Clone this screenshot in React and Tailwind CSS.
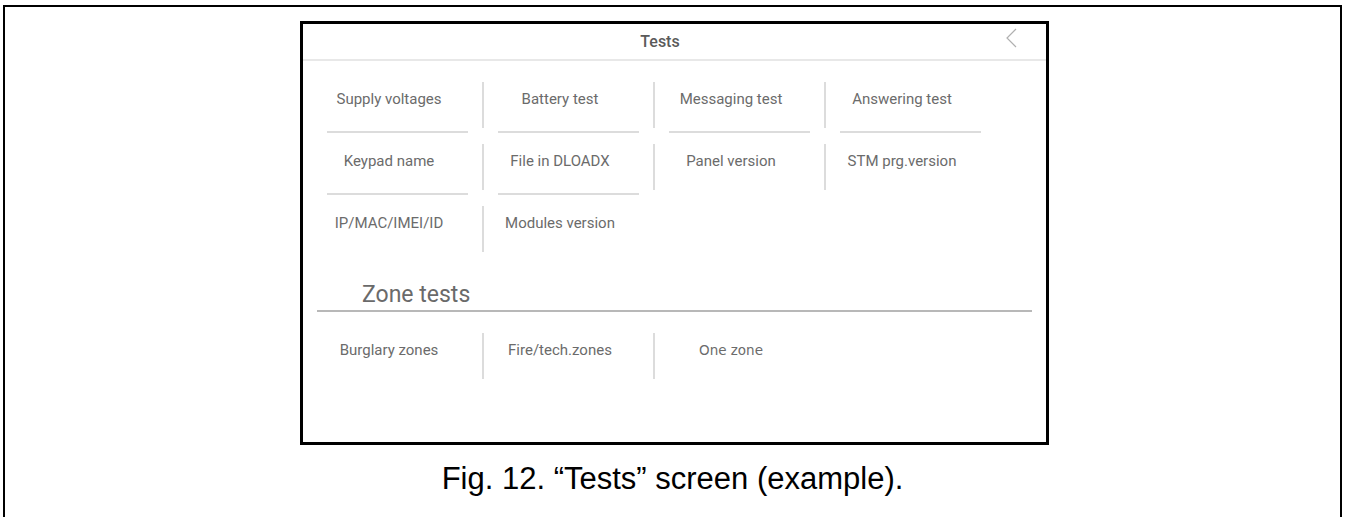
import React from 'react';

const rows = [
    [
        { label: 'Supply voltages', line: true },
        { label: 'Battery test', line: true },
        { label: 'Messaging test', line: true },
        { label: 'Answering test', line: true },
    ],
    [
        { label: 'Keypad name', line: true },
        { label: 'File in DLOADX', line: true },
        { label: 'Panel version' },
        { label: 'STM prg.version' },
    ],
    [{ label: 'IP/MAC/IMEI/ID' }, { label: 'Modules version' }],
];

const zones = [
    { label: 'Burglary zones' },
    { label: 'Fire/tech.zones' },
    { label: 'One zone', alt: true },
];

const Cell = ({ item, first, underline }) => (
    <div className="w-[171px] h-[62px] flex flex-col">
        <div className="flex h-[46px]">
            <div className={`w-[2px] h-[46px] ${first ? '' : 'bg-[#dcdcdc]'}`} />
            <div
                className={`w-[152px] pt-[7px] text-center text-[#6b6b6b] leading-[20px] ${
                    item.alt ? "font-['DejaVu_Sans'] text-[13.5px]" : 'text-[15px]'
                }`}
            >
                {item.label}
            </div>
        </div>
        {underline && item.line && <div className="mt-[3px] ml-[16px] w-[141px] h-[2px] bg-[#dcdcdc]" />}
    </div>
);

export default function App() {
    return (
        <div className="w-full h-[517px] overflow-hidden bg-white font-['Roboto',sans-serif]">
            <div className="mt-[5px] ml-[3px] w-[1339px] h-[560px] border-2 border-black">
                <div className="mt-[14px] ml-[295px] w-[749px] h-[424px] border-[3px] border-black flex flex-col">
                    <div className="h-[35px] flex items-center pl-[12px]">
                        <div className="flex-1 text-center text-[16px] font-medium text-[#5a5a5a]">Tests</div>
                        <svg width="12" height="20" viewBox="0 0 12 20" className="mr-[29px] mt-[-8px]">
                            <polyline points="11,1 2,10 11,19" fill="none" stroke="#b0b0b0" strokeWidth="1.2" />
                        </svg>
                    </div>
                    <div className="h-[2px] bg-[#e8e8e8]" />

                    <div className="mt-[21px] ml-[8px] flex flex-col">
                        {rows.map((row, r) => (
                            <div key={r} className="flex">
                                {row.map((item, i) => (
                                    <Cell key={item.label} item={item} first={i === 0} underline />
                                ))}
                            </div>
                        ))}
                    </div>

                    <div className="mt-[14px] ml-[59px] text-[23px] leading-[26px] text-[#6a6a6a]">Zone tests</div>
                    <div className="mt-[2px] ml-[14px] w-[715px] h-[2px] bg-[#b8b8b8]" />

                    <div className="mt-[21px] ml-[8px] flex">
                        {zones.map((item, i) => (
                            <Cell key={item.label} item={item} first={i === 0} />
                        ))}
                    </div>
                </div>
                <div className="mt-[16px] text-center text-[31px] leading-[36px] text-black font-['Liberation_Sans',sans-serif]">
                    Fig. 12. “Tests” screen (example).
                </div>
            </div>
        </div>
    );
}
